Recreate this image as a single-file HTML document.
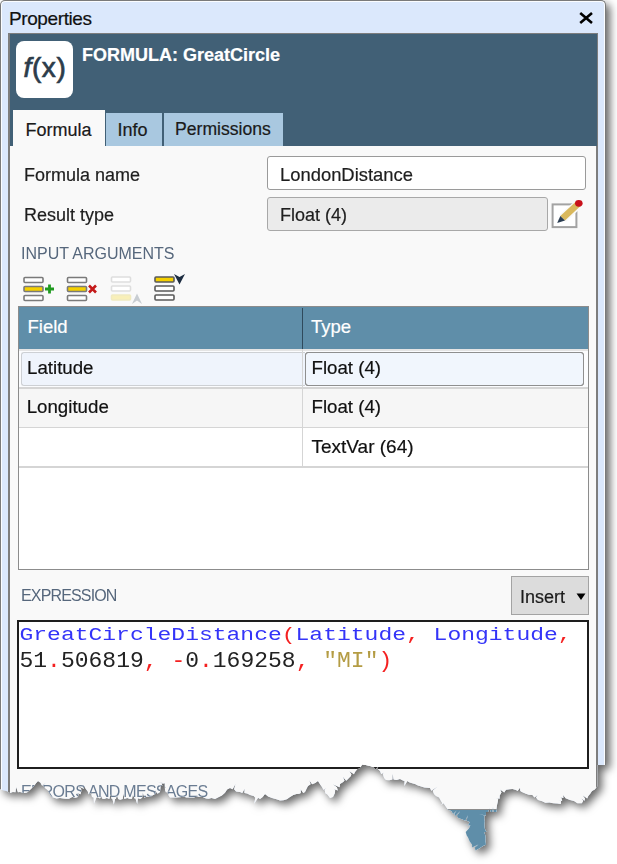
<!DOCTYPE html>
<html><head><meta charset="utf-8">
<style>
html,body{margin:0;padding:0;width:617px;height:864px;overflow:hidden;background:#fff;}
body{font-family:"Liberation Sans",sans-serif;position:relative;}
.a{position:absolute;box-sizing:border-box;}
.t{position:absolute;white-space:nowrap;line-height:1;-webkit-text-stroke:0.2px currentColor;}
#wrap{position:absolute;left:0;top:0;width:617px;height:864px;filter:drop-shadow(4px 4px 4px rgba(0,0,0,.6));}
#paper{position:absolute;left:0;top:0;width:617px;height:864px;clip-path:polygon(612.0px 0.0px,612.0px 765.0px,597.5px 765.0px,597.5px 786.0px,594.8px 789.5px,592.0px 791.0px,590.2px 793.7px,588.3px 796.0px,587.2px 798.4px,582.6px 795.2px,585.0px 798.4px,584.6px 800.8px,581.1px 798.2px,583.3px 800.8px,581.8px 803.2px,577.4px 803.3px,574.0px 801.0px,570.0px 799.9px,565.6px 798.3px,563.2px 795.0px,563.4px 798.0px,559.9px 797.3px,561.4px 798.0px,562.2px 801.0px,558.1px 800.1px,561.0px 801.0px,560.8px 804.0px,557.4px 803.5px,553.2px 803.3px,549.4px 802.4px,545.3px 802.8px,542.2px 801.3px,538.0px 800.0px,536.0px 797.5px,537.6px 794.9px,534.4px 797.5px,532.4px 795.0px,528.8px 794.8px,525.9px 793.8px,521.9px 791.9px,520.3px 791.0px,520.0px 787.7px,517.6px 791.0px,516.0px 790.0px,512.5px 788.9px,509.7px 789.2px,506.0px 789.7px,504.2px 792.5px,500.2px 789.6px,501.5px 792.5px,499.7px 795.4px,499.6px 798.7px,495.4px 797.8px,498.2px 798.7px,497.7px 802.1px,496.9px 805.8px,496.5px 808.5px,496.5px 812.0px,493.7px 812.0px,493.0px 806.6px,492.3px 812.0px,490.9px 812.0px,489.5px 808.3px,488.1px 812.0px,486.0px 812.0px,485.9px 815.5px,478.9px 814.0px,484.4px 815.5px,484.3px 819.0px,484.7px 821.3px,484.4px 824.9px,484.7px 828.2px,486.2px 831.9px,488.0px 831.7px,484.1px 831.9px,485.2px 835.0px,485.6px 838.5px,485.4px 840.7px,486.0px 844.8px,483.4px 845.8px,480.0px 848.0px,475.4px 850.5px,474.9px 847.5px,478.4px 844.4px,472.1px 847.5px,472.1px 844.8px,469.7px 841.6px,467.9px 837.3px,466.7px 835.6px,465.7px 831.9px,468.9px 828.6px,470.4px 825.3px,463.1px 824.6px,468.2px 825.3px,469.7px 822.0px,466.6px 820.7px,467.8px 815.3px,465.3px 820.7px,462.6px 819.6px,458.4px 818.0px,456.8px 816.0px,460.3px 811.0px,455.3px 816.0px,454.3px 814.0px,456.6px 810.6px,453.1px 814.0px,451.4px 811.1px,449.0px 810.0px,447.5px 808.9px,445.2px 805.7px,443.6px 803.2px,441.0px 805.0px,442.4px 803.2px,441.0px 801.0px,439.1px 797.4px,436.0px 796.0px,434.0px 793.9px,432.7px 790.7px,437.6px 786.5px,431.3px 790.7px,430.0px 788.0px,427.5px 787.8px,424.4px 787.4px,421.2px 786.6px,417.9px 785.5px,415.0px 784.0px,412.1px 783.3px,409.1px 782.3px,407.4px 781.0px,404.3px 786.1px,404.6px 781.0px,402.9px 780.6px,400.0px 779.0px,396.4px 780.1px,393.6px 779.5px,392.6px 773.6px,392.4px 779.5px,389.2px 780.2px,386.0px 780.0px,384.1px 778.0px,382.8px 774.0px,384.1px 772.6px,381.2px 774.0px,380.0px 771.0px,378.0px 769.3px,378.1px 766.4px,375.3px 769.3px,373.8px 767.3px,370.0px 766.0px,365.6px 765.1px,362.0px 764.6px,360.2px 768.0px,357.4px 769.1px,355.0px 772.0px,353.9px 774.3px,349.3px 771.0px,351.4px 774.3px,350.9px 776.1px,348.0px 779.0px,346.2px 780.7px,342.9px 776.8px,344.5px 780.7px,342.8px 782.3px,340.0px 784.0px,339.6px 787.2px,332.7px 784.3px,336.9px 787.2px,337.8px 790.5px,334.2px 789.2px,335.2px 790.5px,334.8px 793.3px,333.0px 797.0px,330.0px 798.0px,327.4px 794.4px,325.4px 793.3px,324.6px 789.8px,326.5px 787.9px,323.4px 789.8px,322.0px 787.0px,320.2px 784.4px,318.0px 781.0px,315.2px 783.1px,312.1px 784.3px,309.3px 780.2px,310.6px 784.3px,308.0px 786.0px,306.8px 788.2px,305.0px 792.0px,303.2px 793.0px,300.7px 789.2px,300.8px 793.0px,299.3px 793.7px,296.5px 794.0px,293.3px 795.1px,290.0px 797.0px,286.8px 799.2px,283.4px 800.2px,280.0px 800.5px,276.5px 799.2px,272.0px 798.0px,268.1px 796.5px,265.0px 794.0px,262.7px 797.0px,260.0px 799.0px,258.1px 797.7px,254.2px 803.7px,255.3px 797.7px,253.7px 795.9px,250.0px 795.0px,247.1px 793.6px,244.4px 793.0px,244.6px 788.7px,242.3px 793.0px,240.0px 792.0px,236.1px 791.4px,234.1px 789.3px,235.6px 783.7px,232.6px 789.3px,230.0px 788.0px,227.1px 789.5px,225.0px 792.7px,221.9px 795.6px,218.9px 796.9px,215.0px 799.0px,211.5px 797.9px,208.7px 798.7px,206.0px 798.6px,202.8px 797.1px,200.0px 797.0px,197.1px 796.5px,193.9px 797.4px,190.0px 797.5px,186.3px 797.6px,183.5px 796.4px,180.0px 797.3px,176.7px 797.5px,172.8px 797.6px,170.0px 797.5px,168.9px 796.0px,167.4px 792.5px,170.5px 789.9px,166.0px 792.5px,165.0px 790.0px,164.8px 786.6px,164.8px 783.3px,160.4px 784.0px,162.6px 783.3px,163.0px 780.0px,162.9px 783.0px,156.4px 781.5px,161.6px 783.0px,162.4px 786.0px,156.1px 784.6px,160.6px 786.0px,160.3px 789.6px,160.0px 792.0px,157.5px 793.7px,154.5px 789.4px,155.9px 793.7px,153.3px 795.0px,150.0px 797.0px,146.7px 796.5px,144.4px 797.7px,142.8px 792.4px,142.2px 797.7px,140.1px 798.9px,137.9px 798.3px,137.2px 804.1px,135.4px 798.3px,134.7px 798.7px,132.9px 794.8px,132.0px 798.7px,130.0px 799.0px,127.2px 798.1px,124.3px 799.0px,123.5px 793.2px,122.7px 799.0px,120.2px 799.7px,118.1px 799.0px,117.0px 794.7px,115.9px 799.0px,115.1px 799.0px,113.8px 804.6px,112.4px 799.0px,111.7px 799.0px,110.5px 794.2px,109.3px 799.0px,106.9px 798.0px,104.0px 799.0px,102.0px 798.5px,101.4px 795.9px,100.0px 798.5px,97.6px 797.2px,96.4px 797.5px,94.0px 803.7px,93.6px 797.5px,92.0px 797.0px,91.4px 794.2px,92.2px 792.6px,88.6px 794.2px,87.8px 791.4px,85.9px 789.0px,84.0px 786.0px,83.8px 788.8px,77.5px 786.0px,81.2px 788.8px,81.3px 791.3px,80.5px 794.2px,76.7px 792.7px,78.5px 794.2px,78.0px 797.0px,75.4px 797.7px,72.2px 797.1px,69.0px 798.7px,65.7px 798.7px,63.3px 798.6px,60.0px 798.0px,56.5px 798.4px,52.0px 797.0px,50.0px 794.6px,47.6px 790.0px,45.0px 788.0px,43.3px 785.7px,45.9px 782.4px,42.1px 785.7px,40.5px 782.7px,38.0px 781.0px,36.2px 782.9px,34.1px 785.7px,32.0px 788.0px,29.9px 790.0px,27.0px 792.5px,24.0px 793.0px,20.0px 792.0px,17.9px 792.3px,16.1px 787.1px,15.5px 792.3px,12.8px 791.9px,10.0px 793.0px,6.2px 791.1px,3.4px 790.4px,0.0px 789.0px,0.0px 0.0px);}
#frame{left:0;top:0;width:606px;height:860px;border:1px solid #7a7a7a;border-bottom:none;border-radius:5px 5px 0 0;background:#dbe8fc;box-shadow:inset 0 0 0 1px #fbfdff;}
#panel{left:8px;top:33px;width:589.5px;height:828px;border:2px solid #7d7d7d;background:#f9f9f9;}
#hdr{left:9.5px;top:34px;width:587px;height:112px;background:#416076;}
.lbl{font-size:18px;color:#1e1e1e;}
.cell{font-size:18px;color:#111;}
.code{font-family:"Liberation Mono",monospace;font-size:23px;line-height:1;white-space:pre;position:absolute;-webkit-text-stroke:0;}
.bl{color:#3434f8;}
.rd{color:#f42020;}
.bk{color:#222;}
.ol{color:#b49c44;}
</style></head><body>
<div id="wrap"><div id="paper">
  <div id="frame" class="a"></div>
  <div class="t" style="left:9px;top:8.9px;font-size:19px;letter-spacing:-0.4px;color:#111;">Properties</div>
  <!-- close X -->
  <svg class="a" style="left:577px;top:10px" width="18" height="16" viewBox="0 0 18 16"><path d="M3.2 3 L15 13 M15 3 L3.2 13" stroke="#000" stroke-width="2.6" stroke-linecap="butt"/></svg>

  <div id="panel" class="a"></div>
  <div id="hdr" class="a"></div>
  <!-- fx icon -->
  <div class="a" style="left:15.5px;top:40.5px;width:57px;height:57px;background:#fff;border-radius:8px;"></div>
  <div class="t" style="left:23.5px;top:53.5px;font-size:28px;color:#2c3c4a;-webkit-text-stroke:0.7px #2c3c4a;letter-spacing:0.6px;"><i>f</i>(x)</div>
  <div class="t" style="left:82px;top:46px;font-size:18px;font-weight:bold;color:#fff;">FORMULA: GreatCircle</div>

  <!-- tabs -->
  <div class="a" style="left:13px;top:110px;width:92px;height:37px;background:#f9f9f9;"></div>
  <div class="t" style="left:25.5px;top:120.75px;font-size:18px;color:#1a1a1a;">Formula</div>
  <div class="a" style="left:106px;top:113px;width:56px;height:33px;background:#a9c8e0;"></div>
  <div class="t" style="left:117.5px;top:120.75px;font-size:18px;color:#1a1a1a;">Info</div>
  <div class="a" style="left:164px;top:113px;width:119px;height:33px;background:#a9c8e0;"></div>
  <div class="t" style="left:175px;top:120.75px;font-size:17.6px;color:#1a1a1a;">Permissions</div>

  <!-- form -->
  <div class="t lbl" style="left:24px;top:165.75px;">Formula name</div>
  <div class="t lbl" style="left:24px;top:205.75px;">Result type</div>
  <div class="a" style="left:267px;top:156px;width:319px;height:34px;background:#fff;border:1.5px solid #9a9a9a;border-radius:3px;"></div>
  <div class="t lbl" style="left:280px;top:166px;font-size:18.4px;">LondonDistance</div>
  <div class="a" style="left:267px;top:197px;width:281px;height:33.5px;background:#ebebeb;border:1.5px solid #a8a8a8;border-radius:3px;"></div>
  <div class="t lbl" style="left:280px;top:205.75px;">Float (4)</div>
  <!-- edit icon -->
  <svg class="a" style="left:545px;top:195px" width="45" height="40" viewBox="0 0 45 40">
    <rect x="7.6" y="9.4" width="23.8" height="22.7" fill="#fff" stroke="#a3a3a3" stroke-width="2"/>
    <path d="M14 20 L31.5 4.5 L38 11 L21 27 Z" fill="#f9f9f9"/>
    <path d="M15.3 21 L31 6.5 L35.5 11 L20 25.5 Z" fill="#d9b85c"/>
    <path d="M12.2 27.9 L15.3 21 L20 25.5 Z" fill="#2b3d52"/>
    <ellipse cx="33.8" cy="8.3" rx="3.8" ry="3.4" fill="#c8101a"/>
  </svg>

  <div class="t" style="left:21px;top:246.2px;font-size:16px;color:#56677c;-webkit-text-stroke:0;">INPUT ARGUMENTS</div>
  <!-- toolbar icons -->
  <svg class="a" style="left:20px;top:270px" width="170" height="36" viewBox="0 0 170 36">
    <g stroke-width="1.6" fill="none">
      <rect x="4" y="7.5" width="19" height="5" rx="1" stroke="#7a7a7a" fill="#fff"/>
      <rect x="4" y="16.5" width="19" height="5" rx="1" stroke="#7a7a7a" fill="#f5d000"/>
      <rect x="4" y="25.5" width="19" height="5" rx="1" stroke="#7a7a7a" fill="#fff"/>
      <path d="M29.5 14.5 V23.5 M25 19 H34" stroke="#1f9a1f" stroke-width="2.8"/>
      <rect x="47.5" y="7.5" width="19" height="5" rx="1" stroke="#7a7a7a" fill="#fff"/>
      <rect x="47.5" y="16.5" width="19" height="5" rx="1" stroke="#7a7a7a" fill="#f5d000"/>
      <rect x="47.5" y="25.5" width="19" height="5" rx="1" stroke="#7a7a7a" fill="#fff"/>
      <path d="M69 15.5 L76 22.5 M76 15.5 L69 22.5" stroke="#c41a1a" stroke-width="2.6"/>
      <rect x="91.5" y="7" width="19" height="5" rx="1" stroke="#dedede" fill="#fff"/>
      <rect x="91.5" y="16" width="19" height="5" rx="1" stroke="#dedede" fill="#fff"/>
      <rect x="91.5" y="25" width="19" height="5" rx="1" stroke="#f0eac0" fill="#f8efb8"/>
      <path d="M112 34 L117 23.5 L122 34 L117 30.5 Z" fill="#c8cdd2" stroke="none"/>
      <rect x="135" y="7" width="19" height="5" rx="1" stroke="#5a5a5a" fill="#f5d000"/>
      <rect x="135" y="16" width="19" height="5" rx="1" stroke="#5a5a5a" fill="#fff"/>
      <rect x="135" y="25" width="19" height="5" rx="1" stroke="#5a5a5a" fill="#fff"/>
      <path d="M154 4 L159.5 14.5 L165 4 L159.5 7 Z" fill="#1c2c40" stroke="none"/>
    </g>
  </svg>

  <!-- table -->
  <div class="a" style="left:17.5px;top:306px;width:571px;height:264px;background:#fff;border:1.5px solid #8c8c8c;"></div>
  <div class="a" style="left:18.5px;top:307px;width:569px;height:42px;background:#5f8ea9;"></div>
  <div class="a" style="left:302px;top:307.5px;width:1.2px;height:41.5px;background:#2f4a5c;"></div>
  <div class="t" style="left:27.5px;top:318.3px;font-size:18.5px;color:#fff;">Field</div>
  <div class="t" style="left:311px;top:318.3px;font-size:18.5px;color:#fff;">Type</div>
  <!-- rows -->
  <div class="a" style="left:18.5px;top:349px;width:569px;height:2px;background:#e4e4e4;"></div>
  <div class="a" style="left:18.5px;top:351px;width:569px;height:36px;background:#fbfcfe;"></div>
  <div class="a" style="left:21px;top:352px;width:284px;height:33.5px;background:#eff4fc;border:1.3px solid #cdd0d4;border-right:none;border-radius:3px 0 0 3px;"></div>
  <div class="a" style="left:305px;top:352px;width:279px;height:33.5px;background:#f1f6fd;border:1.5px solid #8f8f8f;border-radius:3px;"></div>
  <div class="a" style="left:18.5px;top:387px;width:569px;height:1.5px;background:#d5d5d5;"></div>
  <div class="a" style="left:18.5px;top:388.5px;width:569px;height:38px;background:#f6f6f6;"></div>
  <div class="a" style="left:18.5px;top:426.5px;width:569px;height:1.5px;background:#d5d5d5;"></div>
  <div class="a" style="left:18.5px;top:466px;width:569px;height:1.5px;background:#d5d5d5;"></div>
  <div class="a" style="left:301.5px;top:349px;width:1.5px;height:118px;background:#d5d5d5;"></div>
  <div class="a" style="left:305px;top:352px;width:279px;height:33.5px;border:1.5px solid #8f8f8f;border-radius:3px;"></div>
  <div class="t cell" style="left:27px;top:359.3px;font-size:18.7px;">Latitude</div>
  <div class="t cell" style="left:311.5px;top:359.3px;font-size:18.7px;">Float (4)</div>
  <div class="t cell" style="left:26.7px;top:398.3px;font-size:18.7px;">Longitude</div>
  <div class="t cell" style="left:311.5px;top:398.3px;font-size:18.7px;">Float (4)</div>
  <div class="t cell" style="left:311.5px;top:437.3px;font-size:19px;">TextVar (64)</div>

  <div class="t" style="left:21px;top:588.4px;font-size:16px;letter-spacing:-0.85px;color:#56677c;-webkit-text-stroke:0;">EXPRESSION</div>
  <!-- insert button -->
  <div class="a" style="left:511px;top:575.5px;width:78px;height:39px;background:#dcdcdc;border:1.5px solid #a3a3a3;"></div>
  <div class="t" style="left:520px;top:587.75px;font-size:18px;color:#1a1a1a;">Insert</div>
  <svg class="a" style="left:576px;top:592px" width="10" height="9" viewBox="0 0 10 9"><path d="M0.5 1.5 H9.5 L5 8 Z" fill="#000"/></svg>

  <!-- expression -->
  <div class="a" style="left:17px;top:620px;width:572px;height:149px;background:#fff;border:2px solid #1e1e1e;"></div>
  <div class="code" style="left:19.5px;top:623px;transform-origin:0 17.6px;transform:scale(1,0.82);"><span class="bl">GreatCircleDistance</span><span class="rd">(</span><span class="bl">Latitude</span><span class="rd">,</span> <span class="bl">Longitude</span><span class="rd">,</span></div>
  <div class="code" style="left:19.5px;top:649.6px;transform-origin:0 17.6px;transform:scale(1,0.92);"><span class="bk">51</span><span class="rd">.</span><span class="bk">506819</span><span class="rd">,</span> <span class="rd">-</span><span class="bk">0</span><span class="rd">.</span><span class="bk">169258</span><span class="rd">,</span> <span class="ol">"MI"</span><span class="rd">)</span></div>

  <div class="t" style="left:21px;top:784px;font-size:16px;letter-spacing:-0.72px;color:#6a7c92;-webkit-text-stroke:0;">ERRORS AND MESSAGES</div>
  <div class="a" style="left:440px;top:809px;width:60px;height:50px;background:#5f8ea9;border-top:1.5px solid #8c8c8c;"></div>
</div></div>
</body></html>
